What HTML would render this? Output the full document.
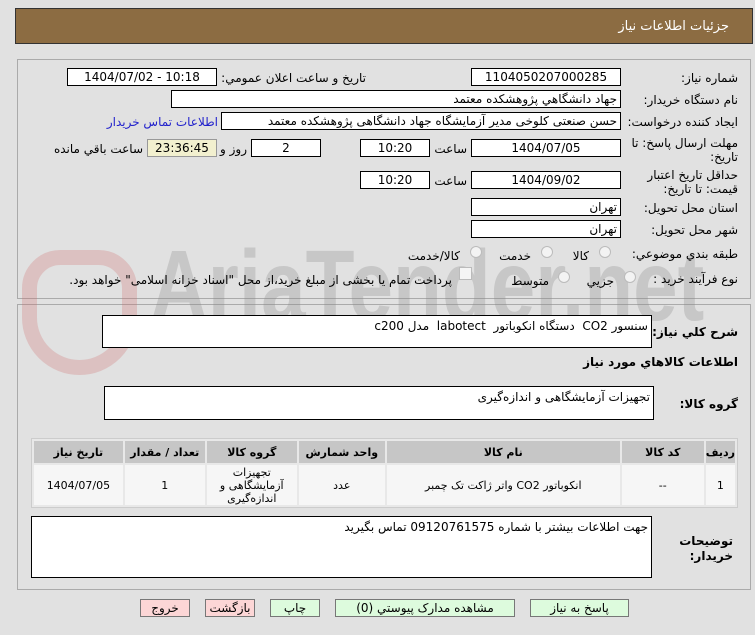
<!DOCTYPE html>
<html><head><meta charset="utf-8"><style>
body{margin:0;width:755px;height:635px;background:#e1e1e1;font-family:Tahoma,"DejaVu Sans","Noto Sans CJK SC",sans-serif;font-size:12px;color:#000;position:relative;overflow:hidden}
.a{position:absolute}
.box{position:absolute;background:#fff;border:1px solid #000;box-sizing:border-box;text-align:center;line-height:16px;font-size:12px;white-space:nowrap}
.r{text-align:right;padding-right:3px}
.l{position:absolute;white-space:nowrap;direction:rtl;font-size:12px;line-height:14px}
.panel{position:absolute;border:1px solid #aaa;box-sizing:border-box}
.rad{position:absolute;width:10px;height:10px;border:1px solid #bbb;border-radius:50%;background:#f3f3f3}
table{position:absolute;border-collapse:separate;border-spacing:2px;background:#e8e8e8;border:1px solid #ccc;direction:rtl}
td,th{text-align:center;font-size:11px;padding:0}
th{background:#c6c6c6;height:22px}
td{background:#f6f6f6;height:40px;line-height:13px}
.btn{position:absolute;height:18px;border:1px solid #777;box-sizing:border-box;text-align:center;line-height:16px;font-size:12px}
</style></head><body>
<div class="a" style="left:15px;top:8px;width:738px;height:36px;background:#8c6c42;border:1px solid #333;box-sizing:border-box"></div>
<div class="l" style="right:26px;top:20px;color:#fff;font-size:13px">جزئيات اطلاعات نياز</div>
<div class="panel" style="left:17px;top:59px;width:734px;height:240px"></div>
<div class="panel" style="left:17px;top:304px;width:734px;height:286px"></div>
<!-- watermark -->
<div class="a" style="left:22px;top:250px;width:115px;height:125px;border:15px solid rgba(210,110,110,.28);border-radius:40px 40px 60px 60px;box-sizing:border-box"></div>
<div class="a" style="left:150px;top:236px;font-size:100px;font-weight:bold;color:rgba(140,140,140,.3);font-family:'Liberation Sans',sans-serif;line-height:100px;transform:scaleX(.8);transform-origin:left">AriaTender.net</div>

<div class="l" style="right:17px;top:71px">شماره نياز:</div>
<div class="box" style="left:471px;top:68px;width:150px;height:18px">1104050207000285</div>
<div class="l" style="right:389px;top:71px">تاريخ و ساعت اعلان عمومي:</div>
<div class="box" style="left:67px;top:68px;width:150px;height:18px">1404/07/02 - 10:18</div>

<div class="l" style="right:17px;top:93px">نام دستگاه خريدار:</div>
<div class="box r" style="left:171px;top:90px;width:450px;height:18px;direction:rtl">جهاد دانشگاهي پژوهشکده معتمد</div>

<div class="l" style="right:17px;top:115px">ايجاد کننده درخواست:</div>
<div class="box r" style="left:221px;top:112px;width:400px;height:18px;direction:rtl">حسن صنعتی کلوخی مدیر آزمایشگاه جهاد دانشگاهی پژوهشکده معتمد</div>
<div class="l" style="right:537px;top:115px;color:#2222cc">اطلاعات تماس خريدار</div>

<div class="l" style="right:17px;top:136px;text-align:right">مهلت ارسال پاسخ: تا<br>تاريخ:</div>
<div class="box" style="left:471px;top:139px;width:150px;height:18px">1404/07/05</div>
<div class="l" style="right:288px;top:142px">ساعت</div>
<div class="box" style="left:360px;top:139px;width:70px;height:18px">10:20</div>
<div class="box" style="left:251px;top:139px;width:70px;height:18px">2</div>
<div class="l" style="right:508px;top:142px">روز و</div>
<div class="box" style="left:147px;top:139px;width:70px;height:18px;background:#f2f0cf;border-color:#999">23:36:45</div>
<div class="l" style="right:612px;top:142px">ساعت باقي مانده</div>

<div class="l" style="right:17px;top:168px">حداقل تاريخ اعتبار<br>قيمت: تا تاريخ:</div>
<div class="box" style="left:471px;top:171px;width:150px;height:18px">1404/09/02</div>
<div class="l" style="right:288px;top:174px">ساعت</div>
<div class="box" style="left:360px;top:171px;width:70px;height:18px">10:20</div>

<div class="l" style="right:17px;top:201px">استان محل تحويل:</div>
<div class="box r" style="left:471px;top:198px;width:150px;height:18px">تهران</div>
<div class="l" style="right:17px;top:223px">شهر محل تحويل:</div>
<div class="box r" style="left:471px;top:220px;width:150px;height:18px">تهران</div>

<div class="l" style="right:17px;top:247px">طبقه بندي موضوعي:</div>
<div class="rad" style="left:599px;top:246px"></div><div class="l" style="right:166px;top:249px">کالا</div>
<div class="rad" style="left:541px;top:246px"></div><div class="l" style="right:224px;top:249px">خدمت</div>
<div class="rad" style="left:470px;top:246px"></div><div class="l" style="right:295px;top:249px">کالا/خدمت</div>

<div class="l" style="right:17px;top:272px">نوع فرآيند خريد :</div>
<div class="rad" style="left:624px;top:271px"></div><div class="l" style="right:141px;top:274px">جزيي</div>
<div class="rad" style="left:558px;top:271px"></div><div class="l" style="right:206px;top:274px">متوسط</div>
<div class="a" style="left:459px;top:267px;width:11px;height:11px;border:1px solid #bbb;background:#f5f5f5"></div>
<div class="l" style="right:303px;top:273px">پرداخت تمام يا بخشی از مبلغ خريد،از محل "اسناد خزانه اسلامی" خواهد بود.</div>

<div class="l" style="right:17px;top:325px;font-weight:bold">شرح کلي نياز:</div>
<div class="box r" style="left:102px;top:315px;width:550px;height:33px;direction:rtl;padding-top:2px">سنسور CO2 &nbsp;دستگاه انکوباتور &nbsp;labotect &nbsp;مدل c200</div>
<div class="l" style="right:17px;top:355px;font-weight:bold">اطلاعات کالاهاي مورد نياز</div>
<div class="l" style="right:17px;top:397px;font-weight:bold">گروه کالا:</div>
<div class="box r" style="left:104px;top:386px;width:550px;height:34px;direction:rtl;padding-top:2px">تجهیزات آزمایشگاهی و اندازه‌گیری</div>

<table style="left:31px;top:438px;width:707px">
<tr><th style="width:27px">رديف</th><th style="width:82px">کد کالا</th><th style="width:233px">نام کالا</th><th style="width:86px">واحد شمارش</th><th style="width:90px">گروه کالا</th><th style="width:80px">تعداد / مقدار</th><th>تاريخ نياز</th></tr>
<tr><td>1</td><td>--</td><td>انکوباتور CO2 واتر ژاکت تک چمبر</td><td>عدد</td><td>تجهیزات<br>آزمایشگاهی و<br>اندازه‌گیری</td><td>1</td><td>1404/07/05</td></tr>
</table>

<div class="l" style="right:22px;top:534px;font-weight:bold;line-height:15px">توضيحات<br>خريدار:</div>
<div class="box r" style="left:31px;top:516px;width:621px;height:62px;direction:rtl;padding-top:2px">جهت اطلاعات بیشتر با شماره 09120761575 تماس بگیرید</div>

<div class="btn" style="left:140px;top:599px;width:50px;background:#fcd6d6">خروج</div>
<div class="btn" style="left:205px;top:599px;width:50px;background:#fcd6d6">بازگشت</div>
<div class="btn" style="left:270px;top:599px;width:50px;background:#ddfbdd">چاپ</div>
<div class="btn" style="left:335px;top:599px;width:180px;background:#ddfbdd">مشاهده مدارک پيوستي (0)</div>
<div class="btn" style="left:530px;top:599px;width:99px;background:#ddfbdd">پاسخ به نياز</div>
</body></html>
